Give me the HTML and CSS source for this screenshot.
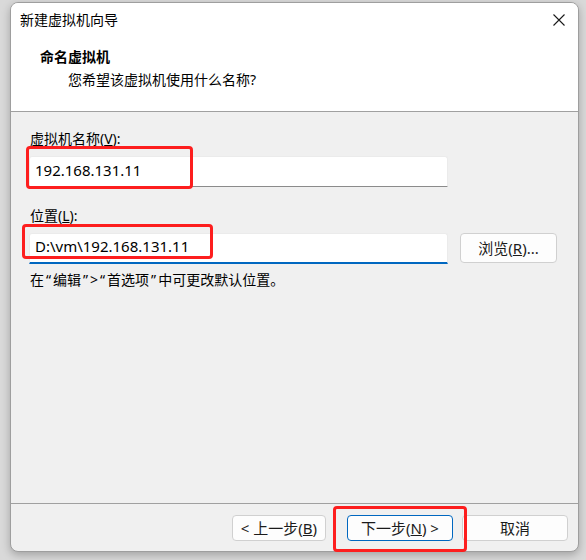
FILE: index.html
```html
<!DOCTYPE html>
<html lang="zh-CN">

<head>
    <meta charset="UTF-8">
    <title>新建虚拟机向导</title>
    <link rel="stylesheet" href="styles.css">
</head>

<body>
    <div class="window">
        <div class="header">
            <div class="titlebar">
                <span class="title">新建虚拟机向导</span>
                <svg class="close" width="12" height="12" viewBox="0 0 12 12">
                    <path d="M0.5 0.5 L11.5 11.5 M11.5 0.5 L0.5 11.5" stroke="#1a1a1a" stroke-width="1.1" fill="none"/>
                </svg>
            </div>
            <div class="heading">命名虚拟机</div>
            <div class="subtitle">您希望该虚拟机使用什么名称?</div>
        </div>

        <div class="content">
            <label class="field-label" for="vmname">虚拟机名称(<u>V</u>):</label>
            <input class="text-input" id="vmname" type="text" value="192.168.131.11">

            <label class="field-label second" for="vmpath">位置(<u>L</u>):</label>
            <div class="location-row">
                <input class="text-input focused" id="vmpath" type="text" value="D:\vm\192.168.131.11">
                <button class="btn browse">浏览(<u>R</u>)...</button>
            </div>
            <p class="hint">在<span class="q">“</span>编辑<span class="q">”</span>&gt;<span class="q">“</span>首选项<span class="q">”</span>中可更改默认位置。</p>
        </div>

        <div class="footer">
            <button class="btn btn-back">&lt; 上一步(<u>B</u>)</button>
            <button class="btn btn-next">下一步(<u>N</u>) &gt;</button>
            <button class="btn btn-cancel">取消</button>
        </div>
    </div>

    <!-- red annotation boxes -->
    <div class="mark mark-name"></div>
    <div class="mark mark-path"></div>
    <div class="mark mark-next"></div>
</body>

</html>
```

FILE: styles.css
```css
* {
    margin: 0;
    padding: 0;
    box-sizing: border-box;
}

body {
    position: relative;
    width: 586px;
    height: 560px;
    overflow: hidden;
    background-color: #d9d9d9;
    font-family: "Noto Sans", "Noto Sans CJK SC", sans-serif;
    font-size: 14px;
    line-height: 20px;
    color: #000;
}

.window {
    display: flex;
    flex-direction: column;
    width: 569px;
    height: 550px;
    margin: 2px 0 0 10px;
    border: 1px solid #9e9e9e;
    border-radius: 8px;
    overflow: hidden;
    background-color: #f0f0f0;
    box-shadow: rgba(0, 0, 0, 0.25) 0px 3px 9px;
}

.header {
    height: 109px;
    background-color: #fff;
    border-bottom: 1px solid #a0a0a0;
}

.titlebar {
    display: flex;
    justify-content: space-between;
    align-items: center;
    height: 20px;
    margin-top: 7px;
    padding: 0 13px 0 9px;
}

.heading {
    margin-top: 17px;
    padding-left: 29px;
    font-weight: 700;
}

.subtitle {
    margin-top: 3px;
    padding-left: 57px;
}

.content {
    flex: 1;
    padding: 17px 0 0 18px;
}

.field-label {
    display: block;
    margin-left: 1px;
}

.field-label.second {
    margin-top: 19px;
}

.text-input {
    display: block;
    width: 419px;
    height: 31px;
    margin-top: 7px;
    padding: 2px 5px 6px 5px;
    border: 1px solid #ebebeb;
    border-bottom-color: #8b8b8b;
    border-radius: 3px 3px 0 0;
    background-color: #fff;
    font-family: inherit;
    font-size: 15px;
    line-height: 20px;
    color: #000;
    outline: none;
}

.text-input.focused {
    padding-bottom: 7px;
    border-bottom: 2px solid #0067c0;
}

.location-row {
    display: flex;
    align-items: flex-start;
    gap: 12px;
    margin-top: 7px;
}

.location-row .text-input {
    margin-top: 0;
}

.hint {
    margin-top: 6px;
    margin-left: 1px;
}

.hint .q {
    margin: 0 2px;
}

.btn {
    height: 26px;
    border: 1px solid #d0d0d0;
    border-radius: 4px;
    background-color: #fdfdfd;
    font-family: inherit;
    font-size: 15px;
    line-height: 20px;
    color: #1b1b1b;
}

.browse {
    width: 97px;
    height: 30px;
}

.footer {
    display: flex;
    justify-content: flex-end;
    height: 48px;
    padding: 11px 10px 0 0;
    border-top: 1px solid #a0a0a0;
}

.btn-back {
    width: 94px;
}

.btn-next {
    width: 106px;
    margin-left: 21px;
    border-color: #0067c0;
}

.btn-cancel {
    width: 106px;
    margin-left: 9px;
}

.mark {
    position: absolute;
    border: 3px solid #fd1e1e;
    border-radius: 4px;
}

.mark-name {
    left: 26px;
    top: 146px;
    width: 167px;
    height: 43px;
}

.mark-path {
    left: 22px;
    top: 224px;
    width: 191px;
    height: 35px;
}

.mark-next {
    left: 333px;
    top: 506px;
    width: 134px;
    height: 46px;
}
```
